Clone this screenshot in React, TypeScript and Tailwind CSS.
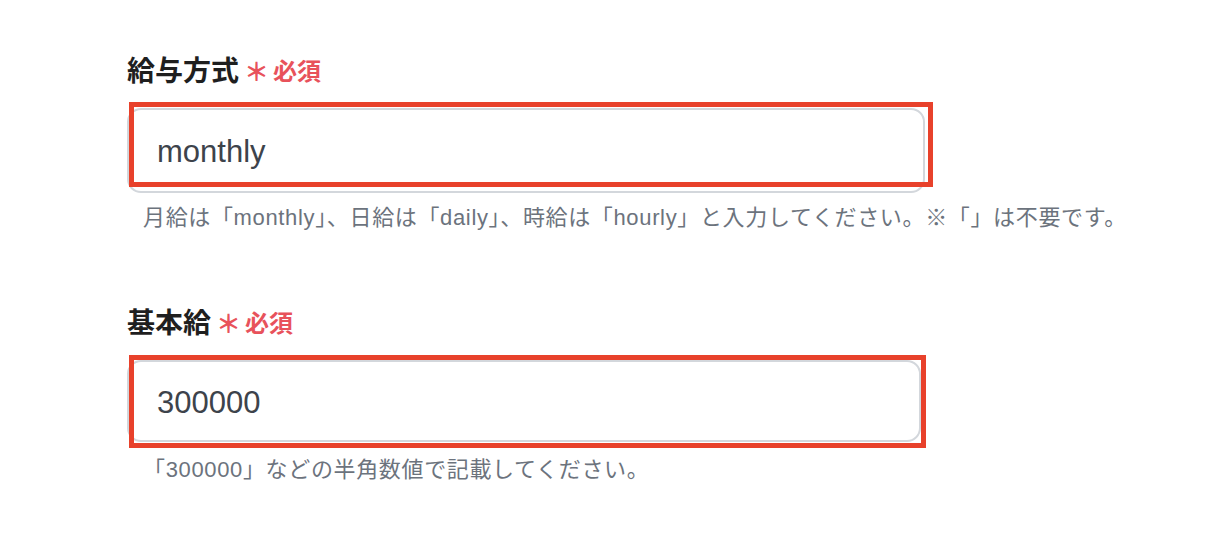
const font = { fontFamily: '"Liberation Sans", "Noto Sans CJK JP", sans-serif' };

function Required() {
  return (
    <span className="ml-[5px] flex items-center font-bold text-[#e8525b]">
      <span className="text-[25px] leading-none">＊</span>
      <span className="ml-[4px] text-[24px] leading-none">必須</span>
    </span>
  );
}

export default function App() {
  return (
    <div className="min-h-[546px] w-[1212px] bg-white pl-[127px] pt-[54px]" style={font}>
      {/* 給与方式 */}
      <div className="flex h-[36px] items-center">
        <span className="text-[28px] font-bold leading-none text-[#1f1f1f]">給与方式</span>
        <Required />
      </div>
      <div className="relative mt-[18px] h-[85px] w-[798px]">
        <div className="flex h-full w-full items-center rounded-[14px] border-2 border-[#d3d7dc] bg-white px-[28px] pt-[4px] text-[31px] text-[#3d434b]">
          monthly
        </div>
        <div className="pointer-events-none absolute left-[2px] top-[-6px] h-[85px] w-[804px] border-[5px] border-[#e8412b]" />
      </div>
      <p className="mt-[11px] pl-[16px] text-[22px] leading-[28px] tracking-[0.65px] text-[#6c737d]">
        月給は「monthly」、日給は「daily」、時給は「hourly」と入力してください。※「」は不要です。
      </p>

      {/* 基本給 */}
      <div className="mt-[74px] flex h-[36px] items-center">
        <span className="text-[28px] font-bold leading-none text-[#1f1f1f]">基本給</span>
        <Required />
      </div>
      <div className="relative mt-[18px] h-[82px] w-[794px]">
        <div className="flex h-full w-full items-center rounded-[14px] border-2 border-[#d3d7dc] bg-white px-[28px] pt-[4px] text-[31px] text-[#3d434b]">
          300000
        </div>
        <div className="pointer-events-none absolute left-[2px] top-[-5px] h-[93px] w-[797px] border-[5px] border-[#e8412b]" />
      </div>
      <p className="mt-[14px] pl-[16px] text-[22px] leading-[28px] tracking-[0.65px] text-[#6c737d]">
        「300000」などの半角数値で記載してください。
      </p>
    </div>
  );
}
